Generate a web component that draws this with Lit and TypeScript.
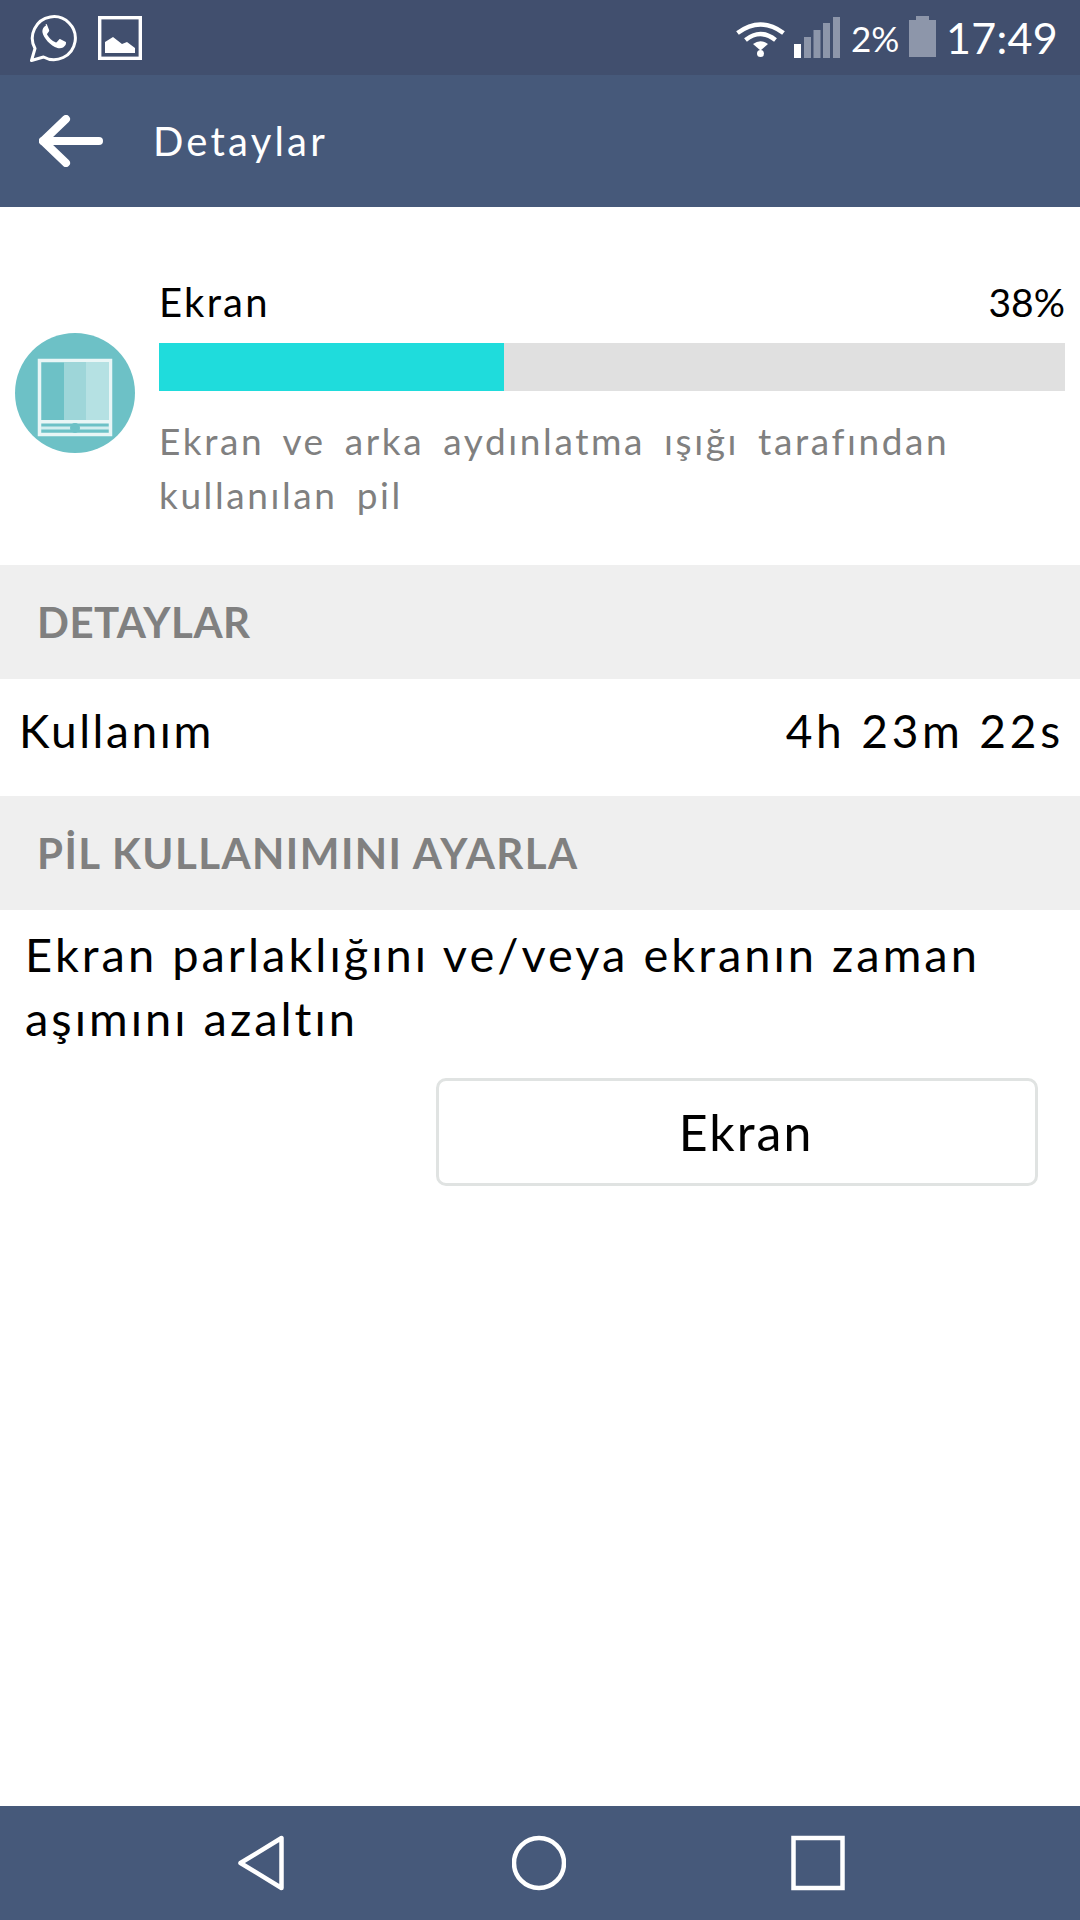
import { LitElement, css, html } from "lit";
import { customElement } from "lit/decorators.js";

@customElement("app-root")
export class AppRoot extends LitElement {
  static styles = css`
    :host {
      display: flex;
      flex-direction: column;
      width: 1080px;
      height: 1920px;
      background: #fff;
      color: #000;
      font-family: "Lato", "Open Sans", sans-serif;
    }

    .status {
      height: 75px;
      background: #414f6e;
      display: flex;
      align-items: center;
      padding: 0 22px 0 30px;
      color: #fff;
    }
    .status-left {
      display: flex;
      align-items: center;
      gap: 21px;
    }
    .status-right {
      margin-left: auto;
      display: flex;
      align-items: center;
    }
    .wifi {
      margin-top: 3px;
    }
    .signal {
      margin: -1px 11px 0 9px;
    }
    .pct-small {
      font-size: 35px;
      width: 45px;
      margin-right: 13px;
      white-space: nowrap;
    }
    .battery {
      margin-top: -2px;
    }
    .clock {
      font-size: 43px;
      letter-spacing: 0.3px;
      margin-left: 10px;
    }

    .appbar {
      height: 132px;
      background: #46597a;
      display: flex;
      align-items: center;
      padding-left: 39px;
      color: #fff;
    }
    .appbar h1 {
      margin: 0 0 0 50px;
      font-size: 40px;
      font-weight: 400;
      letter-spacing: 3.2px;
    }

    .summary {
      height: 358px;
      box-sizing: border-box;
      padding: 0 15px;
      display: flex;
      gap: 24px;
    }
    .summary-icon {
      margin-top: 126px;
      flex: none;
    }
    .summary-body {
      flex: 1;
      padding-top: 72px;
    }
    .summary-head {
      display: flex;
      justify-content: space-between;
      align-items: center;
      height: 46px;
      font-size: 40px;
      letter-spacing: 2.2px;
      margin-bottom: 18px;
    }
    .summary-value {
      font-size: 39px;
      letter-spacing: 0;
    }
    .track {
      height: 48px;
      background: #e0e0e0;
    }
    .fill {
      height: 100%;
      background: #1fdcdc;
    }
    .desc {
      margin: 23px 0 0;
      font-size: 37px;
      line-height: 54px;
      color: #808080;
      letter-spacing: 2.6px;
      word-spacing: 7px;
    }

    .band {
      height: 114px;
      background: #efefef;
      display: flex;
      align-items: center;
      padding-left: 37px;
      font-size: 42px;
      font-weight: 700;
      letter-spacing: 0.5px;
      color: #808080;
    }
    .band.wide {
      letter-spacing: 1.45px;
    }
    .usage {
      height: 117px;
      box-sizing: border-box;
      display: flex;
      align-items: center;
      justify-content: space-between;
      padding: 0 16px 14px 19px;
      font-size: 46px;
      letter-spacing: 2.6px;
    }
    .usage-value {
      letter-spacing: 3.8px;
    }

    .advice {
      flex: 1;
      padding: 12px 42px 0 25px;
      display: flex;
      flex-direction: column;
    }
    .advice p {
      margin: 0;
      font-size: 47px;
      line-height: 64px;
      letter-spacing: 3px;
    }
    .action {
      align-self: flex-end;
      width: 602px;
      height: 108px;
      margin-top: 28px;
      box-sizing: border-box;
      border: 3px solid #e0e3e2;
      border-radius: 10px;
      background: #fff;
      font: inherit;
      font-size: 50px;
      letter-spacing: 2px;
      color: #000;
      padding: 0 0 0 18px;
    }

    .nav {
      height: 114px;
      background: #46597a;
      display: flex;
      align-items: center;
      padding-left: 238px;
    }
    .nav-home {
      margin: 0 225px 0 228px;
    }
    svg {
      display: block;
      flex: none;
    }
  `;

  render() {
    return html`
      <div class="status">
        <div class="status-left">
          <svg width="47" height="48" viewBox="0 0 47 48" fill="none">
            <path d="M1.500 46.500 L5 34.500 A21.500 21.500 0 1 1 13.500 43 Z" stroke="#fff" stroke-width="3" stroke-linejoin="round" />
            <path
              fill="#fff"
              d="M16 11.500c-2 1-4 3.500-3.500 7 .8 5 8 13.500 15 15.500 3.500 1 6.500-.5 8-3 .6-1 .6-2.500.4-3l-5.400-2.800c-.8-.3-1.300 0-1.800.7l-1.800 2.200c-.4.4-.8.5-1.400.2-3.500-1.500-6.500-4.200-8.300-7.500-.3-.6-.2-1 .2-1.400l1.500-2c.4-.5.4-1 .2-1.500l-2.200-5.300c-.3-.6-.7-.7-1.300-.1z"
            />
          </svg>
          <svg width="44" height="44" viewBox="0 0 44 44">
            <rect x="1.700" y="1.700" width="40.600" height="40.600" fill="none" stroke="#fff" stroke-width="3.400" />
            <path fill="#fff" d="M7 37V26l8-5 9 7 5-2 8 6v5z" />
          </svg>
        </div>
        <div class="status-right">
          <svg class="wifi" width="49" height="36" viewBox="0 0 49 36" fill="none" stroke="#fff" stroke-width="4.500">
            <path d="M1.500 12 Q24.500 -5 47.500 12" />
            <path d="M9.500 19 Q24.500 7 39.500 19" />
            <path d="M17 23 L24.500 29.500 L32 23 Q24.500 17.500 17 23Z" fill="#fff" stroke="none" />
            <circle cx="24.500" cy="32.500" r="3.500" fill="#fff" stroke="none" />
          </svg>
          <svg class="signal" width="46" height="41" viewBox="0 0 46 41">
            <rect x="0" y="27" width="7" height="14" fill="#fff" />
            <rect x="10" y="20" width="7" height="21" fill="#8d96aa" />
            <rect x="19.500" y="13" width="7" height="28" fill="#8d96aa" />
            <rect x="29" y="6" width="7" height="35" fill="#8d96aa" />
            <rect x="39" y="0" width="7" height="41" fill="#8d96aa" />
          </svg>
          <span class="pct-small">2%</span>
          <svg class="battery" width="27" height="41" viewBox="0 0 27 41">
            <path fill="#8d96aa" d="M7 0h13v4h7v37H0V4h7z" />
          </svg>
          <span class="clock">17:49</span>
        </div>
      </div>

      <div class="appbar">
        <svg width="64" height="52" viewBox="0 0 64 52" fill="none" stroke="#fff" stroke-width="8" stroke-linecap="round" stroke-linejoin="round">
          <path d="M27 4 L4 26 L27 48" />
          <path d="M4 26 H60" />
        </svg>
        <h1>Detaylar</h1>
      </div>

      <section class="summary">
        <svg class="summary-icon" width="120" height="120" viewBox="0 0 120 120">
          <circle cx="60" cy="60" r="60" fill="#6dc1c6" />
          <rect x="24.500" y="27.500" width="71" height="74" fill="none" stroke="#e9f6f6" stroke-width="3.500" />
          <rect x="49" y="29" width="22" height="58" fill="#9ed6d9" />
          <rect x="71" y="29" width="23" height="58" fill="#b5e1e3" />
          <rect x="26" y="87" width="68" height="3.500" fill="#e9f6f6" />
          <rect x="26" y="93.500" width="68" height="3" fill="#d3eeef" />
          <circle cx="60" cy="95" r="5" fill="#6dc1c6" />
        </svg>
        <div class="summary-body">
          <div class="summary-head"><span>Ekran</span><span class="summary-value">38%</span></div>
          <div class="track"><div class="fill" style="width: 38.1%"></div></div>
          <p class="desc">Ekran ve arka aydınlatma ışığı tarafından kullanılan pil</p>
        </div>
      </section>

      <div class="band">DETAYLAR</div>
      <div class="usage"><span>Kullanım</span><span class="usage-value">4h 23m 22s</span></div>
      <div class="band wide">PİL KULLANIMINI AYARLA</div>

      <section class="advice">
        <p>Ekran parlaklığını ve/veya ekranın zaman aşımını azaltın</p>
        <button class="action">Ekran</button>
      </section>

      <div class="nav">
        <svg width="46" height="56" viewBox="0 0 46 56" fill="none" stroke="#fff" stroke-width="4.500" stroke-linejoin="round">
          <path d="M43.500 3 V53 L2.500 28 Z" />
        </svg>
        <svg class="nav-home" width="54" height="56" viewBox="0 0 54 56" fill="none" stroke="#fff" stroke-width="4.500">
          <circle cx="27" cy="28" r="25" />
        </svg>
        <svg width="54" height="56" viewBox="0 0 54 56" fill="none" stroke="#fff" stroke-width="4.500">
          <rect x="2.500" y="3" width="49" height="50" />
        </svg>
      </div>
    `;
  }
}
